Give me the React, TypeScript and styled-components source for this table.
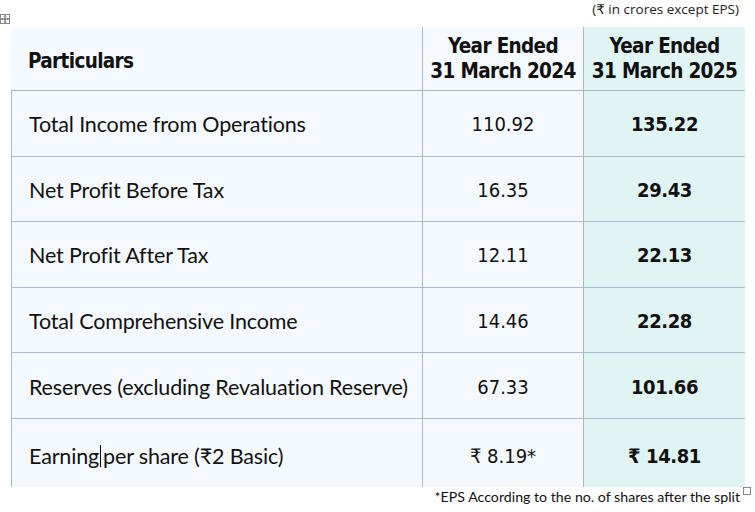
import * as React from 'react';
import styled, { createGlobalStyle } from 'styled-components';

const rows = [
  { label: 'Total Income from Operations', prev: '110.92', curr: '135.22' },
  { label: 'Net Profit Before Tax', prev: '16.35', curr: '29.43' },
  { label: 'Net Profit After Tax', prev: '12.11', curr: '22.13' },
  { label: 'Total Comprehensive Income', prev: '14.46', curr: '22.28' },
  { label: 'Reserves (excluding Revaluation Reserve)', prev: '67.33', curr: '101.66' },
];

export default function App() {
  return (
    <Page>
      <GlobalStyle />
      <MoveHandle>
        <svg width="10" height="10" viewBox="0 0 10 10">
          <rect x="0.5" y="0.5" width="9" height="9" fill="#fff" stroke="#888" />
          <path d="M5 1.5v7M1.5 5h7M4 2.5l1-1 1 1M4 7.5l1 1 1-1M2.5 4l-1 1 1 1M7.5 4l1 1-1 1" stroke="#333" fill="none" strokeWidth="0.8" />
        </svg>
      </MoveHandle>
      <Caption>(₹ in crores except EPS)</Caption>
      <Table>
        <HeadCell lower>Particulars</HeadCell>
        <HeadCell center>
          Year Ended
          <br />
          31 March 2024
        </HeadCell>
        <HeadCell center highlight>
          Year Ended
          <br />
          31 March 2025
        </HeadCell>
        {rows.map((r) => (
          <React.Fragment key={r.label}>
            <LabelCell>{r.label}</LabelCell>
            <ValueCell>{r.prev}</ValueCell>
            <ValueCell highlight bold>
              {r.curr}
            </ValueCell>
          </React.Fragment>
        ))}
        <LabelCell last>
          Earning<Caret />per share (₹2 Basic)
        </LabelCell>
        <ValueCell last>₹ 8.19*</ValueCell>
        <ValueCell last highlight bold>
          ₹ 14.81
        </ValueCell>
      </Table>
      <Footnote>
        *EPS According to the no. of shares after the split
        <ResizeHandle />
      </Footnote>
    </Page>
  );
}

const GlobalStyle = createGlobalStyle`
  body {
    margin: 0;
    background: #ffffff;
    font-family: 'Lato', 'DejaVu Sans', sans-serif;
    color: #111;
  }
`;

const Page = styled.div`
  position: relative;
  width: 755px;
  height: 512px;
  overflow: hidden;
`;

const MoveHandle = styled.div`
  position: absolute;
  left: 0;
  top: 14px;
  line-height: 0;
`;

const Caption = styled.div`
  height: 27px;
  padding-right: 16px;
  text-align: right;
  font-family: 'Open Sans', 'DejaVu Sans', sans-serif;
  font-size: 13.5px;
  line-height: 18px;
  color: #222;
`;

const Table = styled.div`
  margin-left: 11px;
  width: 734px;
  display: grid;
  grid-template-columns: 411px 161px 162px;
  grid-template-rows: 64px repeat(5, 65.6px) 68px;
  background: #f4f9fe;
`;

const Cell = styled.div<{ highlight?: boolean; last?: boolean }>`
  display: flex;
  align-items: center;
  white-space: nowrap;
  padding-top: ${(p) => (p.last ? '6px' : '2px')};
  border-bottom: ${(p) => (p.last ? 'none' : '1px solid #a9bad2')};
  background: ${(p) => (p.highlight ? '#e1f4f4' : 'transparent')};
  & + & {
    border-left: 1px solid #a9bad2;
  }
  &:nth-child(3n + 1) {
    border-left: none;
  }
`;

const HeadCell = styled(Cell)<{ center?: boolean; lower?: boolean }>`
  justify-content: ${(p) => (p.center ? 'center' : 'flex-start')};
  text-align: ${(p) => (p.center ? 'center' : 'left')};
  padding-left: ${(p) => (p.center ? '0' : '17px')};
  padding-top: ${(p) => (p.lower ? '6px' : '0')};
  font-family: 'DejaVu Sans Condensed', 'DejaVu Sans', sans-serif;
  font-weight: bold;
  font-size: 20.5px;
  letter-spacing: -0.65px;
  line-height: 25px;
  border-bottom-color: #a8b6bd;
`;

const LabelCell = styled(Cell)`
  padding-left: 17px;
  font-size: 21.5px;
  letter-spacing: -0.15px;
`;

const ValueCell = styled(Cell)<{ bold?: boolean }>`
  justify-content: center;
  font-family: 'DejaVu Sans Condensed', 'DejaVu Sans', sans-serif;
  font-size: 20px;
  font-weight: ${(p) => (p.bold ? 'bold' : 'normal')};
  letter-spacing: ${(p) => (p.bold ? '-0.4px' : '0')};
`;

const Caret = styled.span`
  display: inline-block;
  width: 1px;
  height: 22px;
  background: #000;
  margin: 0 2px 0 1px;
`;

const Footnote = styled.div`
  position: relative;
  margin-top: -2px;
  padding-right: 15px;
  text-align: right;
  font-family: 'Lato', 'DejaVu Sans', sans-serif;
  font-size: 14.2px;
  line-height: 24px;
  color: #111;
`;

const ResizeHandle = styled.span`
  position: absolute;
  right: 4px;
  top: 2px;
  width: 6px;
  height: 6px;
  border: 1px solid #888;
  background: #fff;
`;
